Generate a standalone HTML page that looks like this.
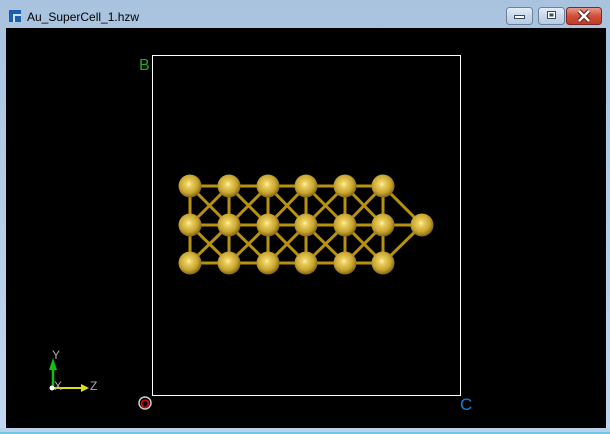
<!DOCTYPE html>
<html><head><meta charset="utf-8"><style>
html,body{margin:0;padding:0;width:610px;height:434px;overflow:hidden;background:#b9d1ea;}
</style></head><body>
<svg width="610" height="434" viewBox="0 0 610 434" xmlns="http://www.w3.org/2000/svg" style="display:block">
<defs>
<linearGradient id="tb" x1="0" y1="0" x2="0" y2="1"><stop offset="0" stop-color="#a9c3df"/><stop offset="1" stop-color="#c2d7ee"/></linearGradient>
<linearGradient id="btn" x1="0" y1="0" x2="0" y2="1"><stop offset="0" stop-color="#e6eef8"/><stop offset="0.5" stop-color="#c8d8ea"/><stop offset="1" stop-color="#b6cbe3"/></linearGradient>
<linearGradient id="cls" x1="0" y1="0" x2="0" y2="1"><stop offset="0" stop-color="#e8a090"/><stop offset="0.5" stop-color="#d0503a"/><stop offset="1" stop-color="#c03a28"/></linearGradient>
<radialGradient id="au" cx="0.45" cy="0.42" r="0.6"><stop offset="0" stop-color="#fff4b0"/><stop offset="0.2" stop-color="#ecd060"/><stop offset="0.65" stop-color="#c8a530"/><stop offset="1" stop-color="#7a6010"/></radialGradient>
</defs>
<rect x="0" y="0" width="610" height="434" fill="url(#tb)"/>
<rect x="0" y="428" width="610" height="6" fill="#b9d1ea"/>
<rect x="0" y="432" width="610" height="2" fill="#6fc7e0"/>
<rect x="9" y="10" width="12" height="12" fill="#1a5fb0"/>
<rect x="13" y="14" width="8" height="8" fill="#cfe0f2"/>
<rect x="15" y="16" width="6" height="6" fill="#1a5fb0"/>
<text x="27" y="21" font-family="Liberation Sans, sans-serif" font-size="12" fill="#000">Au_SuperCell_1.hzw</text>
<rect x="506.5" y="7.5" width="26" height="17" rx="3" fill="url(#btn)" stroke="#6d819b"/>
<rect x="514.5" y="15.5" width="10" height="3" fill="#fff" stroke="#3a4a60" stroke-width="1"/>
<rect x="538.5" y="7.5" width="26" height="17" rx="3" fill="url(#btn)" stroke="#6d819b"/>
<rect x="547.5" y="11.5" width="8" height="7" fill="#fff" stroke="#3a4a60" stroke-width="1"/>
<rect x="549.5" y="13.5" width="4" height="3" fill="#3a4a60"/>
<rect x="566.5" y="7.5" width="35" height="17" rx="3" fill="url(#cls)" stroke="#7a2a20"/>
<path d="M579 11L589 21M589 11L579 21" stroke="#5a1a12" stroke-width="4.5"/>
<path d="M579 11L589 21M589 11L579 21" stroke="#fff" stroke-width="2.5"/>
<rect x="6" y="28" width="600" height="400" fill="#000"/>
<rect x="152.5" y="55.5" width="308" height="340" fill="none" stroke="#fff" stroke-width="1"/>
<text x="139" y="70" font-family="Liberation Sans, sans-serif" font-size="16" fill="#1fa81f">B</text>
<text x="460" y="410" font-family="Liberation Sans, sans-serif" font-size="17" fill="#1a7fd0">C</text>
<circle cx="145" cy="403" r="6" fill="none" stroke="#ccc" stroke-width="1.5"/>
<text x="145" y="408" text-anchor="middle" font-family="Liberation Sans, sans-serif" font-size="12" font-weight="bold" fill="#d01010">O</text>
<g stroke="#b8920e" stroke-width="3">
<line x1="190" y1="186" x2="383" y2="186"/>
<line x1="190" y1="225" x2="422" y2="225"/>
<line x1="190" y1="263" x2="383" y2="263"/>
<line x1="190" y1="186" x2="190" y2="263"/>
<line x1="229" y1="186" x2="229" y2="263"/>
<line x1="268" y1="186" x2="268" y2="263"/>
<line x1="306" y1="186" x2="306" y2="263"/>
<line x1="345" y1="186" x2="345" y2="263"/>
<line x1="383" y1="186" x2="383" y2="263"/>
<path d="M190 186L229 225L268 186L306 225L345 186L383 225L345 263L306 225L268 263L229 225L190 263 M229 186L268 225L306 186L345 225L383 186L422 225L383 263L345 225L306 263L268 225L229 263 M190 225L229 186 M190 225L229 263 M229 225L190 186" fill="none"/>
</g>
<g fill="url(#au)">
<circle cx="190" cy="186" r="11.5"/><circle cx="229" cy="186" r="11.5"/><circle cx="268" cy="186" r="11.5"/><circle cx="306" cy="186" r="11.5"/><circle cx="345" cy="186" r="11.5"/><circle cx="383" cy="186" r="11.5"/>
<circle cx="190" cy="225" r="11.5"/><circle cx="229" cy="225" r="11.5"/><circle cx="268" cy="225" r="11.5"/><circle cx="306" cy="225" r="11.5"/><circle cx="345" cy="225" r="11.5"/><circle cx="383" cy="225" r="11.5"/><circle cx="422" cy="225" r="11.5"/>
<circle cx="190" cy="263" r="11.5"/><circle cx="229" cy="263" r="11.5"/><circle cx="268" cy="263" r="11.5"/><circle cx="306" cy="263" r="11.5"/><circle cx="345" cy="263" r="11.5"/><circle cx="383" cy="263" r="11.5"/>
</g>
<line x1="52" y1="388" x2="82" y2="388" stroke="#e0e010" stroke-width="2"/>
<polygon points="81,384 89,388 81,392" fill="#e0e010"/>
<line x1="53" y1="388" x2="53" y2="368" stroke="#10c010" stroke-width="2.5"/>
<polygon points="49,370 53,358 57,370" fill="#10c010"/>
<circle cx="52" cy="388" r="2.5" fill="#fff"/>
<g font-family="Liberation Sans, sans-serif" font-size="12" fill="#aaa">
<text x="52" y="359">Y</text><text x="90" y="390">Z</text><text x="54" y="390">X</text>
</g>
</svg>
</body></html>
